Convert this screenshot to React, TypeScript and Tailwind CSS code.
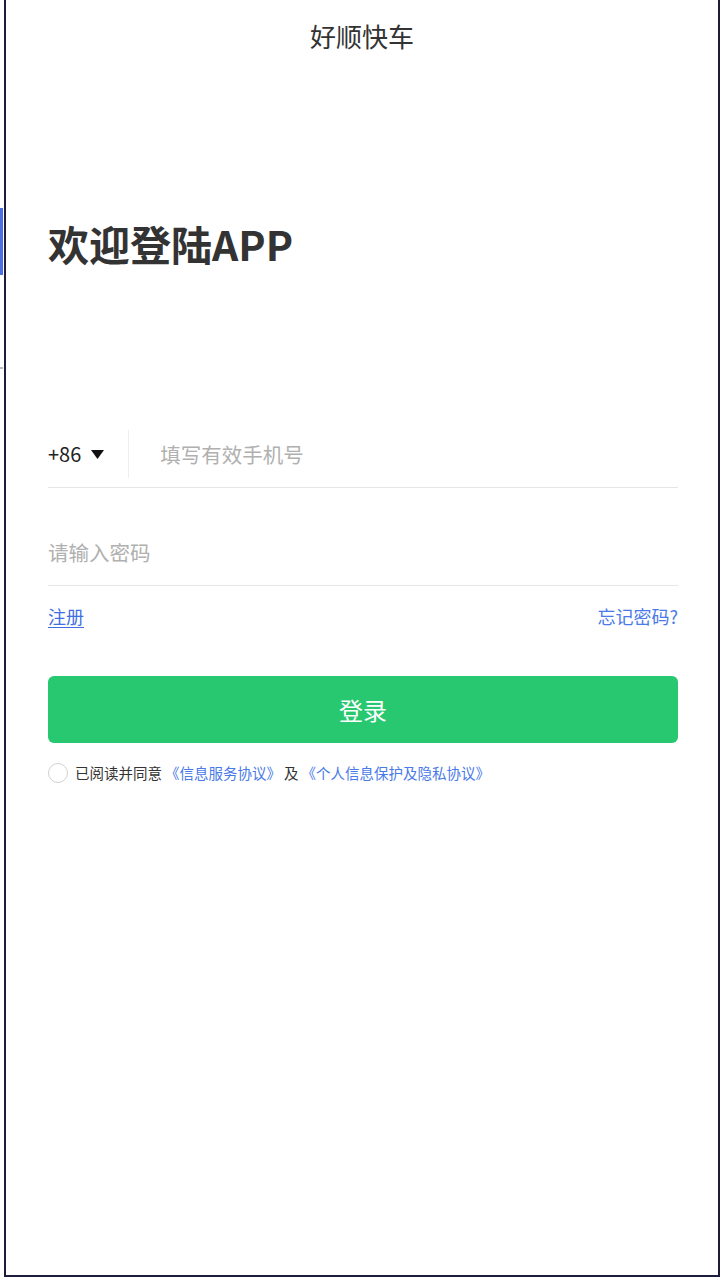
import { useState } from "react";

const font = { fontFamily: '"Noto Sans CJK SC", "Noto Sans", sans-serif' };

const Login = () => {
  const [phone, setPhone] = useState("");
  const [password, setPassword] = useState("");
  const [agreed, setAgreed] = useState(false);

  return (
    <div className="relative w-[720px] h-[1280px] bg-white overflow-hidden" style={font}>
      {/* обрывок соседнего окна слева */}
      <div className="absolute left-0 top-[208px] w-[3px] h-[67px] bg-[#4a6fe3]" />
      <div className="absolute left-0 top-[367px] w-[3px] h-[2px] bg-[#bbbbbb]" />

      <div className="ml-[4px] w-[716px] h-[1277px] border-l-2 border-r-2 border-b-2 border-[#1d1d3b] flex flex-col">
        <div className="h-[74px] pb-[4px] flex items-center justify-center text-[26px] text-[#333333]">
          好顺快车
        </div>

        <div className="pl-[42px] pr-[40px] flex flex-col">
          <h1 className="mt-[141px] text-[41px] leading-[56px] font-bold text-[#333333]">
            欢迎登陆APP
          </h1>

          {/* телефон */}
          <div className="mt-[159px] flex items-start pb-[9px] border-b border-[#e6e6e6]">
            <div className="h-[48px] flex items-center gap-[10px] pr-[24px] border-r border-[#eeeeee] text-[20px] text-[#222222]">
              <span>+86</span>
              <svg width="13" height="9" viewBox="0 0 13 9">
                <path d="M0 0 L13 0 L6.5 9 Z" fill="#111111" />
              </svg>
            </div>
            <input
              className="h-[48px] flex-1 ml-[31px] outline-none text-[20.5px] text-[#222222] placeholder:text-[#b0b0b0] bg-transparent"
              placeholder="填写有效手机号"
              value={phone}
              onChange={(e) => setPhone(e.target.value)}
            />
          </div>

          {/* пароль */}
          <div className="pt-[50px] pb-[19px] border-b border-[#e6e6e6]">
            <input
              type="password"
              className="w-full h-[28px] outline-none text-[20.5px] text-[#222222] placeholder:text-[#b0b0b0] bg-transparent"
              placeholder="请输入密码"
              value={password}
              onChange={(e) => setPassword(e.target.value)}
            />
          </div>

          <div className="mt-[18px] flex justify-between text-[18px] leading-[24px]">
            <a className="text-[#3f6fe0] underline underline-offset-[3px]">注册</a>
            <a className="text-[#4a7ae8]">忘记密码?</a>
          </div>

          <button className="mt-[48px] h-[67px] w-full rounded-[6px] bg-[#27c86f] text-white text-[24px]">
            登录
          </button>

          <div className="mt-[20px] flex items-center h-[20px] text-[14.5px]">
            <button
              className={
                "w-[20px] h-[20px] rounded-full border " +
                (agreed ? "border-[#27c86f] bg-[#27c86f]" : "border-[#d0d0d0] bg-white")
              }
              onClick={() => setAgreed(!agreed)}
            />
            <span className="ml-[7px] text-[#333333]">已阅读并同意</span>
            <span className="ml-[3px] text-[#4a7ae8]">《信息服务协议》</span>
            <span className="mx-[3px] text-[#333333]">及</span>
            <span className="text-[#4a7ae8]">《个人信息保护及隐私协议》</span>
          </div>
        </div>
      </div>
    </div>
  );
};

export default function App() {
  return <Login />;
}
